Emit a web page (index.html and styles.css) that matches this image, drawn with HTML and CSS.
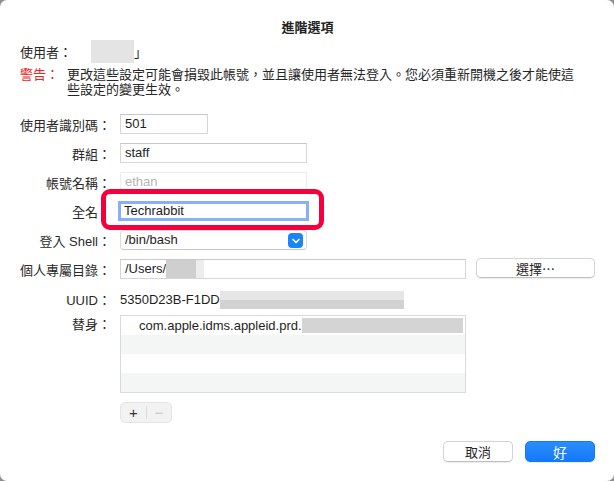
FILE: index.html
```html
<!DOCTYPE html>
<html>
<head>
    <title>進階選項</title>
    <link rel="stylesheet" href="styles.css">
</head>
<body>
    <div class="window">
        <h1 class="title">進階選項</h1>

        <div class="user-line">
            <span>使用者：</span>
            <span class="blur user-blur"></span>
            <span>」</span>
        </div>

        <div class="warning">
            <span class="warn-label">警告：</span>
            <p>更改這些設定可能會損毀此帳號，並且讓使用者無法登入。您必須重新開機之後才能使這些設定的變更生效。</p>
        </div>

        <div class="form">
            <div class="row">
                <label>使用者識別碼：</label>
                <div class="field uid">501</div>
            </div>
            <div class="row">
                <label>群組：</label>
                <div class="field mid">staff</div>
            </div>
            <div class="row">
                <label>帳號名稱：</label>
                <div class="field mid disabled">ethan</div>
            </div>
            <div class="row">
                <label class="no-colon">全名</label>
                <div class="highlight-wrap">
                    <div class="field mid focused">Techrabbit</div>
                    <span class="highlight"></span>
                </div>
            </div>
            <div class="row">
                <label>登入 Shell：</label>
                <div class="field mid select">
                    /bin/bash
                    <span class="chevron">
                        <svg width="8" height="6" viewBox="0 0 8 6"><path d="M1 1.5 L4 4.5 L7 1.5" fill="none" stroke="#fff" stroke-width="1.6" stroke-linecap="round" stroke-linejoin="round"/></svg>
                    </span>
                </div>
            </div>
            <div class="row">
                <label>個人專屬目錄：</label>
                <div class="field wide">/Users/<span class="blur home-blur"></span></div>
                <button class="btn choose">選擇⋯</button>
            </div>
            <div class="row uuid-row">
                <label>UUID：</label>
                <div class="plain">5350D23B-F1DD<span class="blur uuid-blur"></span></div>
            </div>
            <div class="row alias-row">
                <label>替身：</label>
                <div class="alias-area">
                    <div class="table">
                        <div class="trow">com.apple.idms.appleid.prd.<span class="blur alias-blur"></span></div>
                        <div class="trow alt"></div>
                        <div class="trow"></div>
                        <div class="trow alt"></div>
                    </div>
                    <div class="plusminus">
                        <span class="pm plus">+</span>
                        <span class="pm-sep"></span>
                        <span class="pm minus">−</span>
                    </div>
                </div>
            </div>
        </div>

        <div class="footer">
            <button class="btn">取消</button>
            <button class="btn primary">好</button>
        </div>
    </div>
</body>
</html>
```

FILE: styles.css
```css
/* ventana de opciones avanzadas */
body {
    margin: 0;
    background: #8e8e8e;
    font-family: "Liberation Sans", "Noto Sans CJK TC", sans-serif;
    font-size: 13px;
    color: #262626;
}

.window {
    width: 614px;
    height: 481px;
    background: #fff;
    border-radius: 7px;
    box-sizing: border-box;
    padding: 19px 19px 0 20px;
    position: relative;
}

.title {
    margin: 0;
    font-size: 13px;
    font-weight: bold;
    text-align: center;
    line-height: 18px;
    color: #222;
}

.user-line {
    display: flex;
    align-items: center;
    height: 24px;
    margin-top: 2px;
}

.blur {
    display: inline-block;
    background: linear-gradient(90deg, #e2e2e2, #d2d2d2 40%, #d6d6d6 70%, #e4e4e4);
}

.user-blur {
    width: 43px;
    height: 23px;
    margin-left: 19px;
    background: #e4e4e4;
}

.warning {
    display: flex;
    margin-top: 4px;
    line-height: 15px;
}

.warn-label {
    color: #f2231b;
    width: 47px;
    flex: none;
}

.warning p {
    margin: 0;
    width: 514px;
}

.form {
    margin-top: 17px;
    display: flex;
    flex-direction: column;
    gap: 9px;
}

.row {
    display: flex;
    align-items: center;
    min-height: 20px;
}

.row label {
    width: 91px;
    text-align: right;
    margin-right: 9px;
    flex: none;
    color: #2a2a2a;
}

.row label.no-colon {
    width: 78px;
    padding-right: 13px;
}

.field {
    height: 20px;
    box-sizing: border-box;
    border: 1px solid #d6d6d6;
    border-top-color: #c8c8c8;
    padding: 0 4px;
    line-height: 18px;
    color: #1e1e1e;
    background: #fff;
    display: flex;
    align-items: center;
}

.uid { width: 88px; }
.mid { width: 187px; }
.wide { width: 346px; }

.disabled {
    color: #b6b6b6;
    border-color: #ececec;
}

.highlight-wrap {
    position: relative;
}

.focused {
    border: 3px solid #86b1f7;
    width: 191px;
    height: 20px;
    margin-left: -2px;
    padding-left: 3px;
    line-height: 14px;
}

.highlight {
    position: absolute;
    left: -19px;
    top: -12px;
    width: 223px;
    height: 41px;
    box-sizing: border-box;
    border: 5px solid #f5003d;
    border-radius: 9px;
}

.select {
    position: relative;
    border-color: #dcdcdc;
    border-bottom-color: #c6c6c6;
    border-radius: 4px;
}

.chevron {
    position: absolute;
    right: 3px;
    top: 2px;
    width: 15px;
    height: 15px;
    background: #1c84fa;
    border-radius: 4px;
    display: flex;
    align-items: center;
    justify-content: center;
}

.home-blur {
    width: 38px;
    height: 18px;
    background: linear-gradient(90deg, #cfcfcf 80%, #ededed 80%);
}

.btn {
    font-family: inherit;
    font-size: 13px;
    color: #262626;
    background: #fff;
    border: 1px solid #d4d4d4;
    border-bottom-color: #c0c0c0;
    border-radius: 5px;
    height: 21px;
    padding: 0;
    box-shadow: 0 0.5px 1px rgba(0, 0, 0, 0.08);
}

.choose {
    width: 119px;
    margin-left: 10px;
    height: 20px;
    margin-top: -2px;
}

.uuid-row {
    min-height: 16px;
    margin-top: 2px;
}

.plain {
    display: flex;
    align-items: center;
    color: #1e1e1e;
}

.uuid-blur {
    width: 184px;
    height: 18px;
    background: linear-gradient(180deg, #e6e6e6 50%, #d2d2d2 50%);
}

.alias-row {
    align-items: flex-start;
    margin-top: -3px;
}

.alias-row label {
    line-height: 19px;
}

.table {
    width: 346px;
    border: 1px solid #dadada;
    box-sizing: border-box;
}

.trow {
    height: 19px;
    line-height: 19px;
    padding-left: 18px;
    display: flex;
    align-items: center;
    color: #1e1e1e;
}

.trow.alt {
    background: #f4f5f5;
}

.alias-blur {
    width: 161px;
    height: 15px;
    background: #d4d4d4;
    margin-right: -24px;
}

.plusminus {
    margin-top: 9px;
    width: 52px;
    height: 21px;
    box-sizing: border-box;
    border: 1px solid #e4e4e4;
    background: #f2f2f2;
    border-radius: 5px;
    display: flex;
    align-items: center;
}

.pm {
    width: 25px;
    text-align: center;
    font-size: 15px;
    line-height: 19px;
}

.plus { color: #333; }
.minus { color: #c4c4c4; }

.pm-sep {
    width: 1px;
    height: 13px;
    background: #dcdcdc;
}

.footer {
    position: absolute;
    right: 19px;
    bottom: 19px;
    display: flex;
    gap: 12px;
}

.footer .btn {
    width: 70px;
}

.primary {
    background: linear-gradient(#2a8dfd, #1479f7);
    border-color: #1479f7;
    color: #fff;
    font-size: 14px;
}
```
